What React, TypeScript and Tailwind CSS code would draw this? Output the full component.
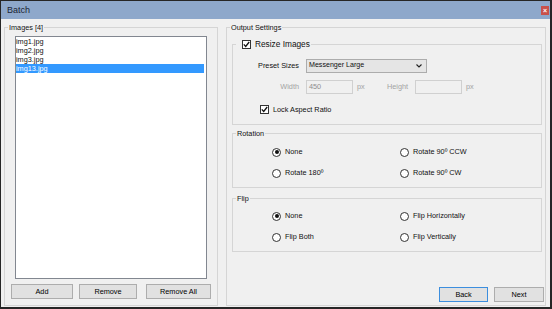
import type { ReactNode } from "react";

const files = ["img1.jpg", "img2.jpg", "img3.jpg", "img13.jpg"];

function Check() {
  return (
    <svg width="7" height="7" viewBox="0 0 7 7">
      <path d="M0.8 3.4 L2.7 5.4 L6.2 1" stroke="#111" strokeWidth="1.3" fill="none" />
    </svg>
  );
}

function Checkbox({ checked }: { checked?: boolean }) {
  return (
    <span className="flex h-[9px] w-[9px] items-center justify-center border border-[#333] bg-white">
      {checked && <Check />}
    </span>
  );
}

function Radio({ checked, label }: { checked?: boolean; label: string }) {
  return (
    <div className="flex h-[10px] items-center whitespace-nowrap">
      <span className="flex h-[9px] w-[9px] items-center justify-center rounded-full border border-[#333] bg-white">
        {checked && <span className="h-[4px] w-[4px] rounded-full bg-[#111]" />}
      </span>
      <span className="ml-[4px]">{label}</span>
    </div>
  );
}

function Group({ label, className, children }: { label: ReactNode; className: string; children: ReactNode }) {
  return (
    <div className={`relative border border-[#d5d5d5] ${className}`}>
      <div className="absolute left-[3px] top-[-5px] flex h-[9px] items-center whitespace-nowrap bg-[#f0f0f0] px-[1px]">{label}</div>
      {children}
    </div>
  );
}

function Btn({ children, className }: { children: ReactNode; className: string }) {
  return (
    <button className={`flex h-[15px] items-center justify-center border bg-[#e1e1e1] text-[7.3px] leading-none text-black ${className}`}>
      {children}
    </button>
  );
}

export default function App() {
  return (
    <div className="flex h-[309px] w-[552px] flex-col border-b-2 border-l border-r-2 border-t border-[#262626] bg-[#f0f0f0] font-['Liberation_Sans',Arial,sans-serif] text-[7.3px] leading-none text-[#111]">
      {/* title bar */}
      <div className="flex h-[18px] shrink-0 items-center bg-[#8ea8cb]">
        <span className="ml-[6px] text-[9px] text-[#1b2533]">Batch</span>
        <span className="ml-auto mr-[1px] flex h-[9px] w-[8px] items-center justify-center bg-[#c9514b] text-[7px] font-bold text-white">×</span>
      </div>

      <div className="flex flex-1 pb-[1px] pl-[3px] pt-[8px]">
        {/* images */}
        <Group label="Images [4]" className="flex w-[214px] flex-col">
          <div className="ml-[10px] mt-[8px] h-[243px] w-[192px] border border-[#828790] bg-white">
            {files.map((f, i) => (
              <div
                key={f}
                className={`flex h-[9px] items-center pr-[2px] ${i === files.length - 1 ? "mr-[2px] bg-[#3399ff] text-white" : ""}`}
              >
                {f}
              </div>
            ))}
          </div>
          <div className="ml-[6px] mt-[5px] flex">
            <Btn className="w-[62px] border-[#adadad]">Add</Btn>
            <Btn className="ml-[6px] w-[58px] border-[#adadad]">Remove</Btn>
            <Btn className="ml-[9px] w-[65px] border-[#adadad]">Remove All</Btn>
          </div>
        </Group>

        {/* output settings */}
        <Group label="Output Settings" className="ml-[8px] flex w-[320px] flex-col pl-[5px] pt-[16px]">
          <Group
            className="h-[81px] w-[310px]"
            label={
              <span className="ml-[5px] flex items-center">
                <Checkbox checked />
                <span className="ml-[4px] text-[8.3px]">Resize Images</span>
              </span>
            }
          >
            <div className="mt-[14px] flex h-[14px] items-center whitespace-nowrap">
              <span className="ml-[27px] flex w-[39px] justify-end">Preset Sizes</span>
              <div className="ml-[7px] flex h-[14px] w-[121px] items-center border border-[#acacac] bg-[#e5e5e5] pl-[2px] pr-[4px] text-[7.1px]">
                Messenger Large
                <svg className="ml-auto" width="6" height="4" viewBox="0 0 6 4">
                  <path d="M0.5 0.5 L3 3 L5.5 0.5" stroke="#222" strokeWidth="1.1" fill="none" />
                </svg>
              </div>
            </div>
            <div className="mt-[7px] flex h-[14px] items-center whitespace-nowrap text-[#a3a3a3]">
              <span className="ml-[27px] flex w-[39px] justify-end">Width</span>
              <div className="ml-[7px] flex h-[14px] w-[47px] items-center border border-[#d0d0d0] pl-[2px] text-[#8f8f8f]">450</div>
              <span className="ml-[4px] w-[8px]">px</span>
              <span className="ml-[22px] w-[21px]">Height</span>
              <div className="ml-[7px] h-[14px] w-[47px] border border-[#d0d0d0]" />
              <span className="ml-[4px]">px</span>
            </div>
            <div className="mt-[11px] flex h-[9px] items-center">
              <span className="ml-[27px]">
                <Checkbox checked />
              </span>
              <span className="ml-[4px]">Lock Aspect Ratio</span>
            </div>
          </Group>

          <Group label="Rotation" className="mt-[8px] h-[55px] w-[310px]">
            <div className="grid grid-cols-[128px_auto] gap-y-[11px] pl-[39px] pt-[13px]">
              <Radio checked label="None" />
              <Radio label="Rotate 90º CCW" />
              <Radio label="Rotate 180º" />
              <Radio label="Rotate 90º CW" />
            </div>
          </Group>

          <Group label="Flip" className="mt-[10px] h-[54px] w-[310px]">
            <div className="grid grid-cols-[128px_auto] gap-y-[11px] pl-[39px] pt-[12px]">
              <Radio checked label="None" />
              <Radio label="Flip Horizontally" />
              <Radio label="Flip Both" />
              <Radio label="Flip Vertically" />
            </div>
          </Group>

          <div className="mt-[35px] flex justify-end gap-[6px] pr-[1px]">
            <Btn className="w-[49px] border-[#3c8ede]">Back</Btn>
            <Btn className="w-[50px] border-[#adadad]">Next</Btn>
          </div>
        </Group>
      </div>
    </div>
  );
}
